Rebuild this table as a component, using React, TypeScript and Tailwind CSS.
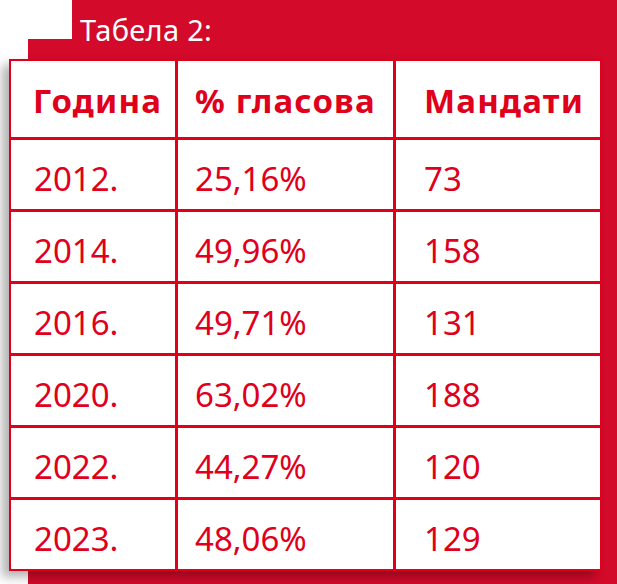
const rows = [
  ["2012.", "25,16%", "73"],
  ["2014.", "49,96%", "158"],
  ["2016.", "49,71%", "131"],
  ["2020.", "63,02%", "188"],
  ["2022.", "44,27%", "120"],
  ["2023.", "48,06%", "129"],
];

const App = () => {
  return (
    <div
      className="w-[617px] h-[584px] flex flex-col bg-white overflow-hidden"
      style={{ fontFamily: '"Noto Sans", "DejaVu Sans", sans-serif' }}
    >
      <div className="flex h-[39px] shrink-0">
        <div className="w-[72px]" />
        <div className="flex-1 bg-[#d30a2a] flex items-end pl-[8px]">
          <span className="text-white text-[29px] leading-none translate-y-[5px] tracking-[0.3px]">Табела 2:</span>
        </div>
      </div>
      <div className="ml-[28px] flex-1 bg-[#d30a2a]">
        <div className="-ml-[19px] mt-[20px] w-[593px] grid grid-cols-[164px_215px_204px] grid-rows-[76px_repeat(6,69px)] gap-[3px] p-[2px] bg-[#e0001b] shadow-[-7px_6px_10px_rgba(0,0,0,0.3)] text-[#e0001b] text-[33px]">
          <div className="bg-white flex items-center pl-[22px] pt-[4px] font-bold tracking-[1.2px]">Година</div>
          <div className="bg-white flex items-center pl-[17px] pt-[4px] font-bold tracking-[1.2px]">% гласова</div>
          <div className="bg-white flex items-center pl-[28px] pt-[4px] font-bold tracking-[1.2px]">Мандати</div>
          {rows.map((r) => (
            <>
              <div className="bg-white flex items-center pl-[23px] pt-[8px]">{r[0]}</div>
              <div className="bg-white flex items-center pl-[17px] pt-[8px]">{r[1]}</div>
              <div className="bg-white flex items-center pl-[28px] pt-[8px]">{r[2]}</div>
            </>
          ))}
        </div>
      </div>
    </div>
  );
};

export default App;
